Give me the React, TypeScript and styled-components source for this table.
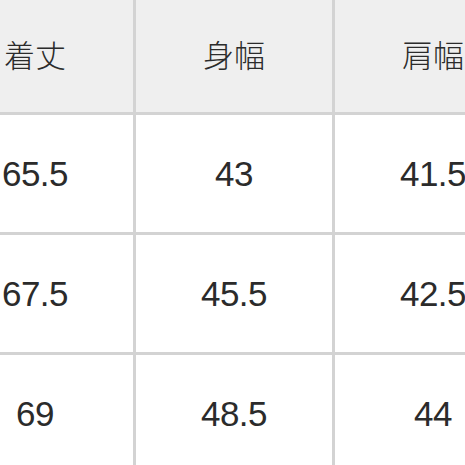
import React from 'react';
import styled, { createGlobalStyle } from 'styled-components';

const GlobalStyle = createGlobalStyle`
    html, body {
        margin: 0;
        padding: 0;
        background: #ffffff;
        overflow: hidden;
    }
    body {
        font-family: "Liberation Sans", "Noto Sans CJK JP", sans-serif;
    }
`;

const Viewport = styled.div`
    width: 465px;
    height: 465px;
    overflow: hidden;
    background: #ffffff;
`;

const SizeTable = styled.div`
    display: grid;
    grid-template-columns: repeat(3, 196px);
    grid-auto-rows: 117px;
    gap: 3px;
    background: #d3d3d3;
    border-bottom: 3px solid #d3d3d3;
    width: max-content;
    margin: -5px 0 0 -63px;
`;

const Cell = styled.div<{ $head?: boolean }>`
    display: flex;
    align-items: center;
    justify-content: center;
    background: ${(p) => (p.$head ? '#efefef' : '#ffffff')};
    color: #2b2b2b;
    font-size: ${(p) => (p.$head ? '31px' : '35px')};
    font-family: ${(p) => (p.$head
        ? '"Noto Sans CJK JP", sans-serif'
        : '"Liberation Sans", Arial, sans-serif')};
    font-weight: ${(p) => (p.$head ? 300 : 400)};
    letter-spacing: ${(p) => (p.$head ? '0' : '-0.5px')};
`;

const headers = ['着丈', '身幅', '肩幅'];
const rows = [
    ['65.5', '43', '41.5'],
    ['67.5', '45.5', '42.5'],
    ['69', '48.5', '44'],
];

export default function App() {
    return (
        <>
            <GlobalStyle />
            <Viewport>
                <SizeTable>
                    {headers.map((h) => (
                        <Cell key={h} $head>{h}</Cell>
                    ))}
                    {rows.map((row, i) =>
                        row.map((v, j) => <Cell key={`${i}-${j}`}>{v}</Cell>),
                    )}
                </SizeTable>
            </Viewport>
        </>
    );
}
